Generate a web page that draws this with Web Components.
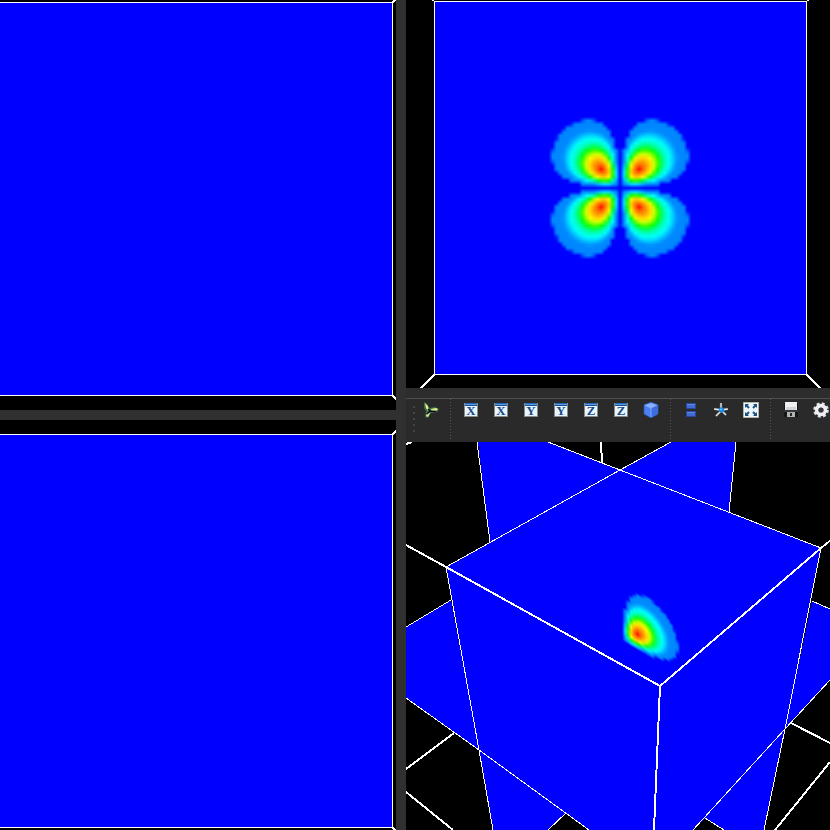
<!DOCTYPE html>
<html lang="en">
<head>
<meta charset="utf-8">
<title>Volume slices</title>
<style>
html, body { margin: 0; height: 100%; background: #2e2e2e; overflow: hidden; font-family: "Liberation Serif", serif; }
</style>
</head>
<body>
<slice-workspace></slice-workspace>
<script>
const define = (name, html, setup) => {
  const t = document.createElement('template');
  t.innerHTML = html;
  customElements.define(name, class extends HTMLElement {
    connectedCallback() {
      if (this.shadowRoot) return;
      this.attachShadow({ mode: 'open' }).append(t.content.cloneNode(true));
      if (setup) setup(this, this.shadowRoot);
    }
  });
};

/* Colour ramp for the density: [value, r, g, b] */
const RAMP = [[0,0,0,255],[.025,0,0,255],[.028,0,132,255],[.08,0,140,255],[.11,0,190,255],[.16,0,255,255],
  [.27,0,255,170],[.39,0,255,0],[.5,150,255,0],[.62,255,255,0],[.82,255,165,0],[.94,255,110,0],[1,255,10,0]];
const colour = v => {
  for (let i = 1; i < RAMP.length; i++) if (v <= RAMP[i][0]) {
    const a = RAMP[i-1], b = RAMP[i], t = (v - a[0]) / (b[0] - a[0]);
    return [1,2,3].map(k => a[k] + t * (b[k] - a[k]));
  }
  return [255,10,0];
};
const STEP = 3.75;
/* Squared xy orbital sampled on a grid, in cells from x0,y0 to x1,y1 around the centre */
const densityGrid = (x0, y0, x1, y1) => {
  const c = document.createElement('canvas');
  c.width = x1 - x0 + 1; c.height = y1 - y0 + 1;
  const g = c.getContext('2d'), im = g.createImageData(c.width, c.height);
  for (let j = 0; j < c.height; j++) for (let i = 0; i < c.width; i++) {
    const x = (i + x0) * STEP, y = (j + y0) * STEP, r = Math.hypot(x, y) || 1, s = r / 26.8;
    const f = 4 * x * x * y * y / r ** 4 * s ** 4 * Math.exp(-4 * (s - 1));
    const p = 4 * (j * c.width + i), q = colour(f);
    im.data[p] = q[0]; im.data[p+1] = q[1]; im.data[p+2] = q[2]; im.data[p+3] = 255;
  }
  g.putImageData(im, 0, 0);
  return c;
};

define('density-map', `<style>:host{display:block;width:100%;height:100%}canvas{display:block;width:100%;height:100%}</style><canvas></canvas>`,
(host, root) => {
  const cv = root.querySelector('canvas'), g = cv.getContext('2d');
  g.imageSmoothingEnabled = true;
  if (host.getAttribute('kind') === 'quadrant') {
    cv.width = 80; cv.height = 90;
    const grid = densityGrid(0, -22, 22, 0);
    g.setTransform(.82, .49, 0, .85, 10, 59);
    g.drawImage(grid, -STEP / 2, -22.5 * STEP, 23 * STEP, 23 * STEP);
  } else {
    cv.width = 160; cv.height = 160;
    const grid = densityGrid(-21, -21, 21, 21);
    g.drawImage(grid, 80 - 21.5 * STEP, 80 - 21.5 * STEP, 43 * STEP, 43 * STEP);
  }
});

const VIEW = `:host{display:block;min-width:0;min-height:0;overflow:hidden;background:#000}
svg{display:block;width:100%;height:100%}
.f{fill:#00f}.e{fill:none;stroke:#fff;stroke-width:1}.t{fill:none;stroke:#fff;stroke-width:2}`;

define('side-view-top', `<style>${VIEW}</style>
<svg viewBox="0 0 396 410" preserveAspectRatio="xMinYMin slice" shape-rendering="crispEdges" aria-label="X slice">
<path class="f" d="M0 2H393V396H0z"/><path class="e" d="M0 2.5H392.5V395.5H0"/>
<path class="t" d="M392 3l4-4M392 395l5 5"/></svg>`);

define('side-view-bottom', `<style>${VIEW}</style>
<svg viewBox="0 0 396 410" preserveAspectRatio="xMinYMin slice" shape-rendering="crispEdges" aria-label="Y slice">
<path class="f" d="M0 14H393V408H0z"/><path class="e" d="M0 14.5H392.5V407.5H0"/>
<path class="t" d="M392 15l5-5M392 407l5 5"/></svg>`);

define('front-view', `<style>${VIEW}</style>
<svg viewBox="0 0 424 388" preserveAspectRatio="xMidYMin slice" shape-rendering="crispEdges" aria-label="Z slice">
<path class="f" d="M28 1H401V375H28z"/>
<foreignObject x="134" y="108" width="160" height="160"><density-map></density-map></foreignObject>
<path class="e" d="M28.500 1.500H400.500V374.500H28.500z"/>
<path class="t" d="M28 375L14 389M401 375l14 14M28 1l-3-3M401 1l3-3"/></svg>`);

define('cube-view', `<style>${VIEW}</style>
<svg viewBox="406 442 424 388" preserveAspectRatio="xMidYMin slice" shape-rendering="crispEdges" aria-label="3D view">
<path class="f" d="M478 442H548L620 470L490 542zM671 442H736L729 512L620 470z
M446 567L620 470L821 548L785 729L705 818L693 830H589L566 813L479 750z
M406 627L451 600L479 750L406 698zM479 750L566 813L548 830H493z
M785 729L764 830H724L705 818zM812 601L830 609V680L785 729z"/>
<foreignObject x="612" y="582" width="80" height="90"><density-map kind="quadrant"></density-map></foreignObject>
<path class="e" d="M477 442L490 542M548 442L620 470L821 548M671 442L620 470L446 567M736 442L729 512
M446 567L479 750L493 830M821 548L785 729L764 830M406 627L451 600M406 698L479 750L589 830
M566 813L548 830M812 601L830 609M830 680L785 729L693 830M705 818L724 830"/>
<path class="t" d="M601 442L602 463M406 444l6-2M406 545L446 567L660 686L821 548L831 540M660 686L654 830
M406 769L454 733M406 792L453 830M791 723L830 743M830 762L775 830"/></svg>`);

define('tool-button', `<style>
:host{display:block;flex:none;width:30px;height:22px}
button{all:unset;display:flex;width:100%;height:100%;align-items:center;justify-content:center;cursor:pointer}
::slotted(svg){display:block;width:16px;height:16px}
</style><button type="button"><slot></slot></button>`,
(host, root) => root.querySelector('button').setAttribute('aria-label', host.getAttribute('label')));

define('axis-icon', `<style>
:host{display:block;box-sizing:border-box;width:14px;height:14px;border:1px solid #8a8a80;border-top:0;
background:linear-gradient(#2468b8 0 1px,#5a9ade 1px 2px,#174c98 2px 3px,#e8f6ff 3px,#e4f5ff);
color:#1d4880;font:bold 13px/14px "Liberation Serif",serif;text-align:center;overflow:hidden}
span{display:block;padding-top:1px}
</style><span><slot></slot></span>`);

define('tool-separator', `<style>
:host{display:block;flex:none;width:10px;height:40px;
background:repeating-linear-gradient(#555 0 1px,transparent 1px 3px) 4px 0/1px 100% no-repeat}
</style>`);

define('tool-handle', `<style>
:host{display:flex;flex:none;flex-direction:column;gap:4px;width:10px;padding:7px 0 0 7px;box-sizing:border-box}
i{display:block;width:2px;height:2px;background:#444}
</style><i></i><i></i><i></i><i></i><i></i>`);

define('view-toolbar', `<style>
:host{display:block;min-width:0;overflow:hidden;background:#2d2d2d;padding-top:10px}
div{display:flex;align-items:flex-start;height:43px;border-top:1px solid #505050;background:#2a2a2a}
</style>
<div role="toolbar" aria-label="View">
<tool-handle></tool-handle>
<tool-button label="Application"><svg viewBox="0 0 16 16"><path d="M1 0l3 2 2 4 6-1 4 2-2 3-6 1-3 5-3-1 1-6-2-3z" fill="#3f6f4a"/><path d="M2 1l3 3 1 4-1 1-2-3zM8 7l5-1 2 1-2 2-4 1zM5 10l2 1-2 4-2-1z" fill="#e2ee86"/><path d="M5 7l2 2 6 .5M7 9l-3 3" stroke="#07101f" stroke-width="1.500" fill="none"/></svg></tool-button>
<tool-separator></tool-separator>
<tool-button label="View along X"><axis-icon>X</axis-icon></tool-button>
<tool-button label="View along negative X"><axis-icon>X</axis-icon></tool-button>
<tool-button label="View along Y"><axis-icon>Y</axis-icon></tool-button>
<tool-button label="View along negative Y"><axis-icon>Y</axis-icon></tool-button>
<tool-button label="View along Z"><axis-icon>Z</axis-icon></tool-button>
<tool-button label="View along negative Z"><axis-icon>Z</axis-icon></tool-button>
<tool-button label="Isometric view"><svg viewBox="0 0 16 16"><path d="M8 0l7 3v9l-7 4-7-4V3z" fill="#4a80f0" stroke="#2c54b8" stroke-width=".7"/><path d="M8 1l6 2-6 3-6-3z" fill="#86aefc"/><path d="M8 6l6-3v9l-6 3z" fill="#3c6ce0"/><path d="M2 3l6 3v9M8 6l6-3" fill="none" stroke="#9abcff" stroke-width=".7"/></svg></tool-button>
<tool-separator></tool-separator>
<tool-button label="Parallel projection"><svg viewBox="0 0 16 16"><path d="M3 1h10v6H3zM3 9h10v6H3z" fill="#2447a0"/><path d="M4 2h8v4H4zM4 10h8v4H4z" fill="#426bd0"/><path d="M4 2h8v1H4zM4 10h8v1H4z" fill="#6089e3"/></svg></tool-button>
<tool-button label="Orientation axes"><svg viewBox="0 0 16 16"><path d="M8 1v7M8 8l6-1M8 8l5 5M8 9l-5 5M8 8L2 7" stroke="#666" stroke-width="2.400"/><path d="M8 1v7M8 8l7-1M8 8l5 5M8 9l-5 5M8 8L1 7" stroke="#e4e4df" stroke-width="1.300"/><circle cx="8.500" cy="8" r="2.700" fill="#1788e8"/><circle cx="8" cy="7.500" r="1" fill="#6cc4ff"/></svg></tool-button>
<tool-button label="Full screen"><svg viewBox="0 0 16 16"><path d="M.5.5h15v15H.5z" fill="#edf8fc" stroke="#b6b59f"/><path d="M3 3l3 3M13 3l-3 3M3 13l3-3M13 13l-3-3" stroke="#204f86" stroke-width="2"/><path d="M2 2h4L2 6zM14 2h-4l4 4zM2 14h4l-4-4zM14 14h-4l4-4z" fill="#204f86"/></svg></tool-button>
<tool-separator></tool-separator>
<tool-button label="Save screenshot"><svg viewBox="0 0 16 16"><path d="M1 1h14v14H2l-1-1z" fill="#15161a"/><path d="M2 0h12v8H2z" fill="#f0f0f2"/><path d="M3 5h10v3H3z" fill="#d2d3d8"/><path d="M4 10h8v5H4z" fill="#b3b3ad"/><path d="M7 11h2v3H7z" fill="#24262a"/><path d="M1 9h14" stroke="#55585f"/></svg></tool-button>
<tool-button label="Settings"><svg viewBox="0 0 16 16"><circle cx="8" cy="8" r="6.400" fill="none" stroke="#e2e1e8" stroke-width="2.800" stroke-dasharray="2.800 2.226"/><circle cx="8" cy="8" r="4.400" fill="none" stroke="#efeef4" stroke-width="3.600"/><circle cx="8" cy="8" r="2.300" fill="#38383b"/></svg></tool-button>
</div>`);

define('slice-workspace', `<style>
:host{display:grid;height:100vh;grid-template-columns:396fr 10px 424fr;background:#303030}
section{display:grid;min-width:0;min-height:0}
.left{grid-column:1;grid-template-rows:minmax(0,1fr) 10px minmax(0,1fr)}
.left>:last-child{grid-row:3}
.right{grid-column:3;grid-template-rows:minmax(0,1fr) 54px minmax(0,1fr)}
</style>
<section class="left"><side-view-top></side-view-top><side-view-bottom></side-view-bottom></section>
<section class="right"><front-view></front-view><view-toolbar></view-toolbar><cube-view></cube-view></section>`);
</script>
</body>
</html>
